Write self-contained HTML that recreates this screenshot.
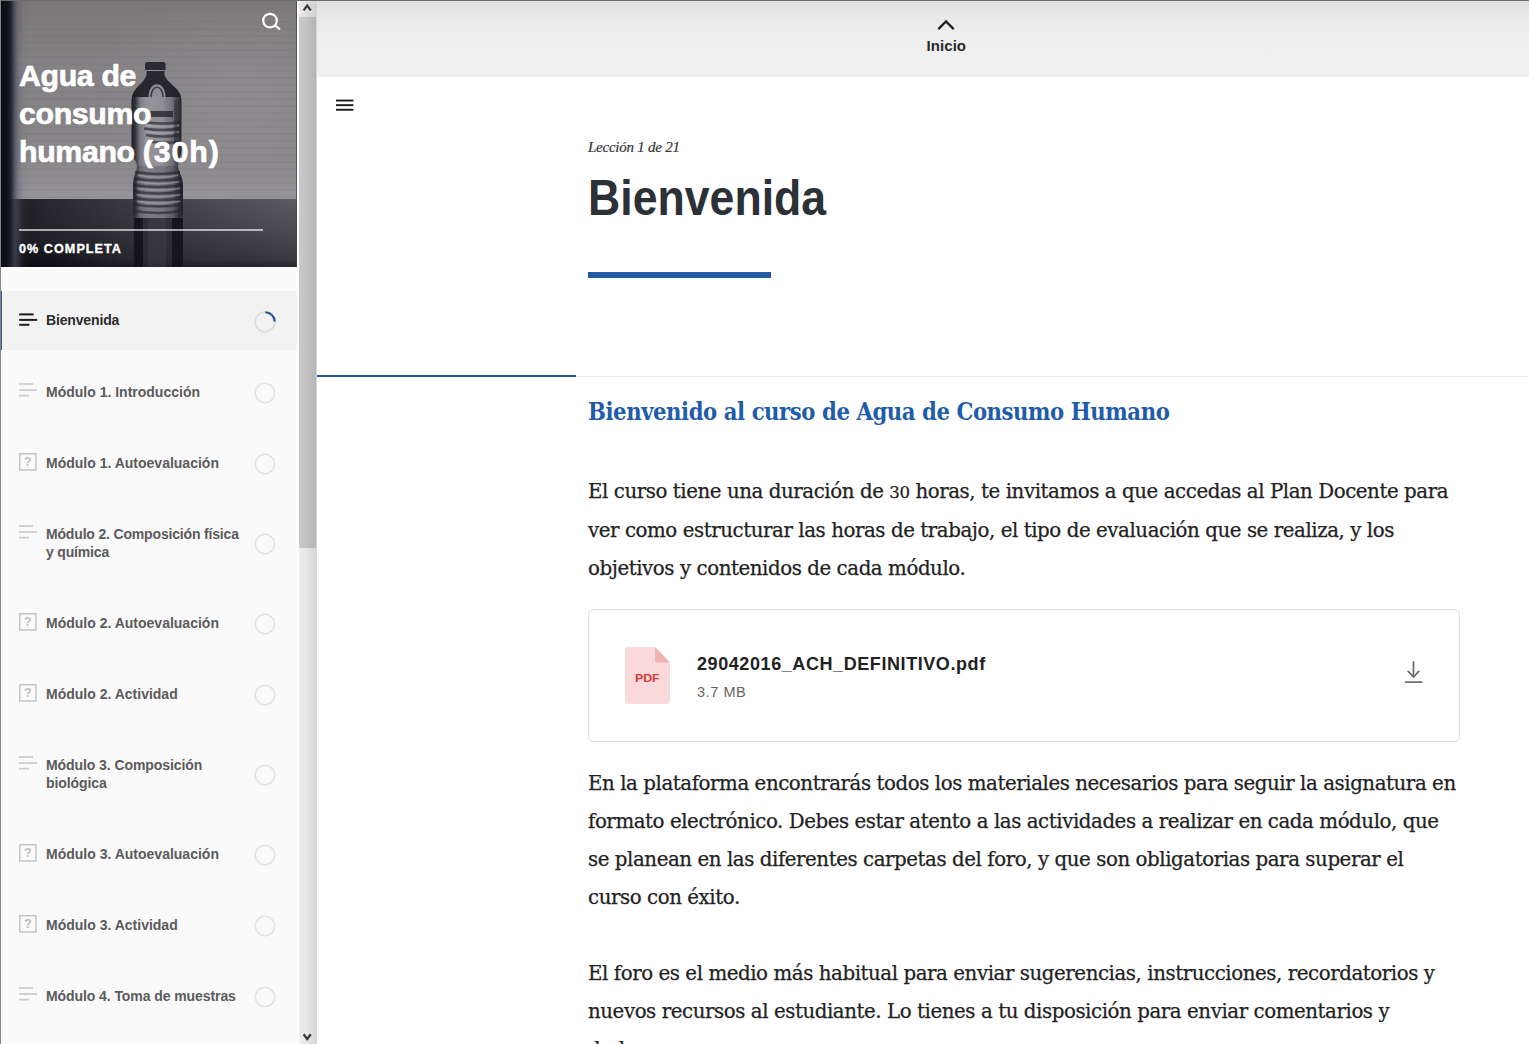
<!DOCTYPE html>
<html lang="es">
<head>
<meta charset="utf-8">
<title>Agua de consumo humano (30h)</title>
<style>
*{box-sizing:border-box;margin:0;padding:0}
html,body{width:1529px;height:1044px;overflow:hidden;background:#fff}
body{position:relative;font-family:"Liberation Sans",sans-serif;color:#222}
.abs{position:absolute}
.nw{white-space:nowrap}
/* ---------- frame ---------- */
#topline{left:0;top:0;width:1529px;height:1px;background:#6c6c6c;z-index:50}
#leftline{left:0;top:0;width:1px;height:1044px;background:#848484;z-index:50}
/* ---------- sidebar ---------- */
#side{left:0;top:0;width:297px;height:1044px;background:#fafafa;overflow:hidden}
#hero{left:0;top:0;width:297px;height:267px;overflow:hidden;background:#86848a}
#hero svg{position:absolute;left:0;top:0}
#ctitle{left:19px;top:57px;width:270px;font-weight:bold;font-size:30.3px;line-height:38px;color:#fff;letter-spacing:-0.35px;-webkit-text-stroke:.7px #fff}
#ctitle span{letter-spacing:.9px}
#pline{left:19px;top:229px;width:244px;height:2px;background:rgba(255,255,255,.62)}
#pct{left:19px;top:241px;font-weight:bold;font-size:12.6px;line-height:16px;letter-spacing:1.05px;color:#fff;-webkit-text-stroke:.35px #fff}
.item{left:0;width:297px;height:59px}
.item.act{background:#f2f2f2;border-left:2px solid #2a5a9c}
.item .t{position:absolute;left:46px;top:20.8px;font-weight:bold;font-size:14px;line-height:18.5px;color:#5b5b5b;white-space:nowrap}
.item.two{height:77px}
.item.two .t{top:20.5px}
.item.act .t{color:#2b2b2b;left:44px;top:19.8px;letter-spacing:-.15px}
.item svg{position:absolute}
/* ---------- scrollbar ---------- */
#sgap{left:297px;top:0;width:2px;height:1044px;background:#fff}
#sbar{left:299px;top:0;width:18px;height:1044px;background:linear-gradient(90deg,#efefef 0,#e6e6e6 40%,#d6d6d6 100%)}
#sthumb{left:299px;top:17px;width:16.6px;height:531px;background:linear-gradient(90deg,#c9c9c9 0,#c1c1c1 50%,#b5b5b5 100%)}
/* ---------- main ---------- */
#topbar{left:317px;top:0;width:1212px;height:77px;background:linear-gradient(180deg,#dfdfdf 0,#e5e5e5 12%,#ebebeb 30%,#efefef 52%,#f0f0f0 100%)}
#inicio{left:926.6px;top:37px;font-weight:bold;font-size:15px;line-height:18px;color:#2a2a2a;letter-spacing:.05px}
#lec{left:588px;top:138px;font-family:"Liberation Serif",serif;font-style:italic;font-size:15px;line-height:18px;color:#333;letter-spacing:-.25px;-webkit-text-stroke:.2px #333}
#h1{left:588px;top:168px;font-weight:bold;font-size:50px;line-height:60px;color:#2b3137;transform-origin:0 50%;transform:scaleX(.893)}
#bar{left:588px;top:272px;width:183px;height:6px;background:#255ba3}
#div1{left:317px;top:375px;width:259px;height:2px;background:#24559a}
#div2{left:576px;top:376px;width:953px;height:1px;background:#ebebeb}
#h2{left:588px;top:397px;font-family:"DejaVu Serif Condensed","DejaVu Serif","Liberation Serif",serif;font-weight:bold;font-size:24.4px;line-height:30px;color:#1f5cab;letter-spacing:-.45px;transform-origin:0 50%;transform:scaleX(.9665)}
.p{left:588px;font-family:"DejaVu Serif","Liberation Serif",serif;font-size:19.8px;line-height:38px;color:#222;-webkit-text-stroke:.25px #222;letter-spacing:-.43px}
#file{left:588px;top:609px;width:871.5px;height:132.6px;border:1px solid #dcdcdc;border-radius:5px;background:#fff}
#fname{left:697px;top:653px;font-weight:bold;font-size:18px;line-height:22px;color:#222;letter-spacing:.58px}
#fsize{left:697px;top:683px;font-size:14.5px;line-height:18px;color:#666;letter-spacing:.55px}
</style>
</head>
<body>

<!-- ================= SIDEBAR ================= -->
<div id="side" class="abs">
  <div id="hero" class="abs">
    <svg width="297" height="267" viewBox="0 0 297 267">
      <defs>
        <linearGradient id="wall" x1="0" y1="0" x2="0" y2="1">
          <stop offset="0" stop-color="#7a7678"/>
          <stop offset=".3" stop-color="#848184"/>
          <stop offset=".8" stop-color="#8a878b"/>
          <stop offset=".95" stop-color="#949196"/>
          <stop offset="1" stop-color="#9a979c"/>
        </linearGradient>
        <linearGradient id="tbl" x1="0" y1="0" x2="0" y2="1">
          <stop offset="0" stop-color="#5f5e66"/>
          <stop offset=".45" stop-color="#504f57"/>
          <stop offset=".88" stop-color="#3d3c44"/>
          <stop offset="1" stop-color="#26262c"/>
        </linearGradient>
        <linearGradient id="tbld" x1="0" y1="0" x2="1" y2="0">
          <stop offset="0" stop-color="#0b0b11" stop-opacity=".82"/>
          <stop offset=".15" stop-color="#0b0b11" stop-opacity=".66"/>
          <stop offset=".4" stop-color="#0c0c12" stop-opacity=".46"/>
          <stop offset=".7" stop-color="#0c0c12" stop-opacity=".24"/>
          <stop offset="1" stop-color="#0c0c12" stop-opacity=".04"/>
        </linearGradient>
        <radialGradient id="vig" cx="0" cy="1" r=".42" gradientTransform="scale(1 1)">
          <stop offset="0" stop-color="#07070b" stop-opacity=".8"/>
          <stop offset=".5" stop-color="#0a0a10" stop-opacity=".4"/>
          <stop offset="1" stop-color="#0a0a10" stop-opacity="0"/>
        </radialGradient>
        <linearGradient id="ledge" x1="0" y1="0" x2="1" y2="0">
          <stop offset="0" stop-color="#0a0c12" stop-opacity="1"/>
          <stop offset=".026" stop-color="#10131a" stop-opacity="1"/>
          <stop offset=".038" stop-color="#1f232d" stop-opacity=".96"/>
          <stop offset=".048" stop-color="#3e4352" stop-opacity=".8"/>
          <stop offset=".06" stop-color="#555768" stop-opacity=".45"/>
          <stop offset=".076" stop-color="#5c5c68" stop-opacity=".12"/>
          <stop offset=".1" stop-color="#5c5c68" stop-opacity="0"/>
          <stop offset="1" stop-color="#5c5c68" stop-opacity="0"/>
        </linearGradient>
        <radialGradient id="glow" cx=".8" cy=".45" r=".5">
          <stop offset="0" stop-color="#a09ea2" stop-opacity=".3"/>
          <stop offset="1" stop-color="#a09ea2" stop-opacity="0"/>
        </radialGradient>
        <linearGradient id="bot" x1="0" y1="0" x2="1" y2="0">
          <stop offset="0" stop-color="#1f1f27"/>
          <stop offset=".07" stop-color="#32323b"/>
          <stop offset=".17" stop-color="#7d7c83"/>
          <stop offset=".3" stop-color="#95949a"/>
          <stop offset=".6" stop-color="#8f8e94"/>
          <stop offset=".8" stop-color="#6f6e76"/>
          <stop offset=".92" stop-color="#34343d"/>
          <stop offset="1" stop-color="#1f1f27"/>
        </linearGradient>
        <linearGradient id="refl" x1="0" y1="0" x2="0" y2="1">
          <stop offset="0" stop-color="#0f0f15" stop-opacity=".8"/>
          <stop offset="1" stop-color="#0f0f15" stop-opacity=".35"/>
        </linearGradient>
        <pattern id="blinds" width="4" height="7" patternUnits="userSpaceOnUse">
          <rect width="4" height="7" fill="none"/>
          <rect y="0" width="4" height="2" fill="#6b696e" opacity=".14"/>
        </pattern>
      </defs>
      <rect width="297" height="200" fill="url(#wall)"/>
      <rect width="297" height="200" fill="url(#glow)"/>
      <rect y="18" width="297" height="180" fill="url(#blinds)"/>
      <rect y="199" width="297" height="68" fill="url(#tbl)"/>
      <rect y="199" width="297" height="68" fill="url(#tbld)"/>
      <rect y="199" width="297" height="68" fill="url(#vig)"/>
      <!-- bottle reflection -->
      <rect x="134" y="218" width="49" height="49" fill="#2a2a34" opacity=".55"/>
      <rect x="134" y="218" width="9" height="49" fill="#0d0d13" opacity=".75"/>
      <rect x="172" y="218" width="11" height="49" fill="#0d0d13" opacity=".75"/>
      <rect x="148" y="218" width="18" height="49" fill="#55555f" opacity=".22"/>
      <!-- bottle -->
      <path d="M145 70 L145 64.4 Q145 62 147.4 62 L163.2 62 Q165.6 62 165.6 64.4 L165.6 70 Z" fill="#2a2a33"/>
      <path d="M146.5 70 H164.5 V75 C166.5 83 180.5 88 181.5 100 V150 C181 158 178 161 178 166 C178 172 183 176 183 186 V213 Q183 218 178 218 H138 Q133 218 133 213 V186 C133 176 137 172 137 166 C137 161 132 158 131.5 150 V100 C132.5 88 144.5 83 146.5 75 Z" fill="url(#bot)"/>
      <path d="M146.5 71 H164.5 V75 C166.5 83 180 88 181 97 L132 97 C133 88 144.5 83 146.5 75 Z" fill="#202028" opacity=".93"/>
      <path d="M148.5 97 C148.5 80 165.5 80 165.5 97 Z" fill="#9a999f" opacity=".9"/>
      <path d="M151 97 C151 84 163 84 163 97" fill="none" stroke="#2a2a33" stroke-width="1.6" opacity=".8"/>
      <path d="M137 166 H178 C178 172 183 176 183 186 V213 Q183 218 178 218 H138 Q133 218 133 213 V186 C133 176 137 172 137 166 Z" fill="#25252e" opacity=".22"/>
      <rect x="150" y="111" width="23" height="6" fill="#25252e" opacity=".8"/>
      <g stroke="#22222a" stroke-width="2.4" opacity=".62" fill="none">
        <path d="M144 122 Q162 125 181 122"/>
        <path d="M144 128.5 Q162 131.5 181 128.5"/>
        <path d="M146 135 Q162 138 181 135"/>
        <path d="M150 141.5 Q164 144 181 141.5"/>
        <path d="M135 172 Q158 176 180 172"/>
        <path d="M134 178.5 Q158 182.5 181.5 178.5"/>
        <path d="M133.5 185 Q158 189 182.5 185"/>
        <path d="M133.5 191.5 Q158 195.5 183 191.5"/>
        <path d="M133.5 198 Q158 202 183 198"/>
        <path d="M133.5 204.5 Q158 208.5 183 204.5"/>
        <path d="M135 211 Q158 215 182 211"/>
      </g>
      <g stroke="#b4b3b8" stroke-width="1.4" opacity=".5" fill="none">
        <path d="M146 125.3 Q162 128.3 179 125.3"/>
        <path d="M146 131.8 Q162 134.8 179 131.8"/>
        <path d="M138 175.2 Q158 179.2 178 175.2"/>
        <path d="M137 181.8 Q158 185.8 179 181.8"/>
        <path d="M137 188.3 Q158 192.3 180 188.3"/>
        <path d="M137 194.8 Q158 198.8 180 194.8"/>
        <path d="M137 201.3 Q158 205.3 180 201.3"/>
      </g>
      <rect x="174" y="100" width="3" height="48" fill="#26262f" opacity=".45"/>
      <rect width="297" height="267" fill="url(#ledge)"/>
      <rect x="296" y="0" width="1" height="267" fill="#45444c" opacity=".7"/>
      <!-- search icon -->
      <g fill="none" stroke="#fff" stroke-width="2.2" stroke-linecap="round">
        <circle cx="270" cy="20.6" r="6.8"/>
        <path d="M275.2 25.6 L279.4 28.9"/>
      </g>
    </svg>
    <div id="ctitle" class="abs">Agua de<br>consumo<br>humano <span>(30h)</span></div>
    <div id="pline" class="abs"></div>
    <div id="pct" class="abs nw">0% COMPLETA</div>
  </div>

  <div class="item act abs" style="top:291px">
    <svg style="left:17px;top:20px" width="20" height="18" viewBox="0 0 20 18"><g fill="#1e1e1e"><rect x="0.2" y="2.4" width="14.4" height="2"/><rect x="0.2" y="7.9" width="18" height="2"/><rect x="0.2" y="12.8" width="10.2" height="2"/></g></svg>
    <div class="t">Bienvenida</div>
    <svg style="left:249.9px;top:17.9px" width="26" height="26" viewBox="0 0 26 26"><circle cx="13" cy="13" r="9.8" fill="none" stroke="#dcdcdc" stroke-width="1.7"/><path d="M13.34 3.21 A9.8 9.8 0 0 1 22.79 12.66" fill="none" stroke="#2257a0" stroke-width="2.1"/></svg>
  </div>
  <div class="item abs" style="top:362px">
    <svg style="left:19.3px;top:20.2px" width="20" height="18" viewBox="0 0 20 18"><g fill="#cbcbcb"><rect x="0" y="1.2" width="14" height="1.7"/><rect x="0" y="7.2" width="18" height="1.7"/><rect x="0" y="12.8" width="10" height="1.7"/></g></svg>
    <div class="t">Módulo 1. Introducción</div>
    <svg style="left:252px;top:18.2px" width="26" height="26" viewBox="0 0 26 26"><circle cx="13" cy="13" r="9.7" fill="none" stroke="#e3e3e3" stroke-width="1.6"/></svg>
  </div>
  <div class="item abs" style="top:433px">
    <svg style="left:19.1px;top:20.4px" width="19" height="19" viewBox="0 0 19 19"><rect x="0.75" y="0.75" width="16.2" height="16.2" fill="none" stroke="#c3c3c3" stroke-width="1.5"/><text x="8.9" y="13.2" text-anchor="middle" font-family="Liberation Sans, sans-serif" font-size="12.5" font-weight="bold" fill="#bcbcbc">?</text></svg>
    <div class="t">Módulo 1. Autoevaluación</div>
    <svg style="left:252px;top:18.2px" width="26" height="26" viewBox="0 0 26 26"><circle cx="13" cy="13" r="9.7" fill="none" stroke="#e3e3e3" stroke-width="1.6"/></svg>
  </div>
  <div class="item two abs" style="top:504px">
    <svg style="left:19.3px;top:20.2px" width="20" height="18" viewBox="0 0 20 18"><g fill="#cbcbcb"><rect x="0" y="1.2" width="14" height="1.7"/><rect x="0" y="7.2" width="18" height="1.7"/><rect x="0" y="12.8" width="10" height="1.7"/></g></svg>
    <div class="t" style="letter-spacing:-.17px">Módulo 2. Composición física<br>y química</div>
    <svg style="left:252px;top:27.2px" width="26" height="26" viewBox="0 0 26 26"><circle cx="13" cy="13" r="9.7" fill="none" stroke="#e3e3e3" stroke-width="1.6"/></svg>
  </div>
  <div class="item abs" style="top:593px">
    <svg style="left:19.1px;top:20.4px" width="19" height="19" viewBox="0 0 19 19"><rect x="0.75" y="0.75" width="16.2" height="16.2" fill="none" stroke="#c3c3c3" stroke-width="1.5"/><text x="8.9" y="13.2" text-anchor="middle" font-family="Liberation Sans, sans-serif" font-size="12.5" font-weight="bold" fill="#bcbcbc">?</text></svg>
    <div class="t">Módulo 2. Autoevaluación</div>
    <svg style="left:252px;top:18.2px" width="26" height="26" viewBox="0 0 26 26"><circle cx="13" cy="13" r="9.7" fill="none" stroke="#e3e3e3" stroke-width="1.6"/></svg>
  </div>
  <div class="item abs" style="top:664px">
    <svg style="left:19.1px;top:20.4px" width="19" height="19" viewBox="0 0 19 19"><rect x="0.75" y="0.75" width="16.2" height="16.2" fill="none" stroke="#c3c3c3" stroke-width="1.5"/><text x="8.9" y="13.2" text-anchor="middle" font-family="Liberation Sans, sans-serif" font-size="12.5" font-weight="bold" fill="#bcbcbc">?</text></svg>
    <div class="t">Módulo 2. Actividad</div>
    <svg style="left:252px;top:18.2px" width="26" height="26" viewBox="0 0 26 26"><circle cx="13" cy="13" r="9.7" fill="none" stroke="#e3e3e3" stroke-width="1.6"/></svg>
  </div>
  <div class="item two abs" style="top:735px">
    <svg style="left:19.3px;top:20.2px" width="20" height="18" viewBox="0 0 20 18"><g fill="#cbcbcb"><rect x="0" y="1.2" width="14" height="1.7"/><rect x="0" y="7.2" width="18" height="1.7"/><rect x="0" y="12.8" width="10" height="1.7"/></g></svg>
    <div class="t" style="letter-spacing:-.08px">Módulo 3. Composición<br>biológica</div>
    <svg style="left:252px;top:27.2px" width="26" height="26" viewBox="0 0 26 26"><circle cx="13" cy="13" r="9.7" fill="none" stroke="#e3e3e3" stroke-width="1.6"/></svg>
  </div>
  <div class="item abs" style="top:824px">
    <svg style="left:19.1px;top:20.4px" width="19" height="19" viewBox="0 0 19 19"><rect x="0.75" y="0.75" width="16.2" height="16.2" fill="none" stroke="#c3c3c3" stroke-width="1.5"/><text x="8.9" y="13.2" text-anchor="middle" font-family="Liberation Sans, sans-serif" font-size="12.5" font-weight="bold" fill="#bcbcbc">?</text></svg>
    <div class="t">Módulo 3. Autoevaluación</div>
    <svg style="left:252px;top:18.2px" width="26" height="26" viewBox="0 0 26 26"><circle cx="13" cy="13" r="9.7" fill="none" stroke="#e3e3e3" stroke-width="1.6"/></svg>
  </div>
  <div class="item abs" style="top:895px">
    <svg style="left:19.1px;top:20.4px" width="19" height="19" viewBox="0 0 19 19"><rect x="0.75" y="0.75" width="16.2" height="16.2" fill="none" stroke="#c3c3c3" stroke-width="1.5"/><text x="8.9" y="13.2" text-anchor="middle" font-family="Liberation Sans, sans-serif" font-size="12.5" font-weight="bold" fill="#bcbcbc">?</text></svg>
    <div class="t">Módulo 3. Actividad</div>
    <svg style="left:252px;top:18.2px" width="26" height="26" viewBox="0 0 26 26"><circle cx="13" cy="13" r="9.7" fill="none" stroke="#e3e3e3" stroke-width="1.6"/></svg>
  </div>
  <div class="item abs" style="top:966px">
    <svg style="left:19.3px;top:20.2px" width="20" height="18" viewBox="0 0 20 18"><g fill="#cbcbcb"><rect x="0" y="1.2" width="14" height="1.7"/><rect x="0" y="7.2" width="18" height="1.7"/><rect x="0" y="12.8" width="10" height="1.7"/></g></svg>
    <div class="t" style="letter-spacing:-.08px">Módulo 4. Toma de muestras</div>
    <svg style="left:252px;top:18.2px" width="26" height="26" viewBox="0 0 26 26"><circle cx="13" cy="13" r="9.7" fill="none" stroke="#e3e3e3" stroke-width="1.6"/></svg>
  </div>
</div>

<!-- ================= SCROLLBAR ================= -->
<div id="sgap" class="abs"></div>
<div id="sbar" class="abs"></div>
<div id="sthumb" class="abs"></div>
<svg class="abs" style="left:299px;top:0" width="18" height="17" viewBox="0 0 18 17"><defs><linearGradient id="sbb" x1="0" x2="1" y1="0" y2="0"><stop offset="0" stop-color="#eaeaea"/><stop offset="1" stop-color="#d0d0d0"/></linearGradient></defs><rect width="18" height="17" fill="url(#sbb)"/><path d="M4.6 10.4 L8.2 5.6 L11.8 10.4" fill="none" stroke="#3a3a3a" stroke-width="2.3"/></svg>
<svg class="abs" style="left:299px;top:1027px" width="18" height="17" viewBox="0 0 18 17"><path d="M4.6 7.2 L8.2 12 L11.8 7.2" fill="none" stroke="#3a3a3a" stroke-width="2.3"/></svg>

<!-- ================= MAIN ================= -->
<div id="topbar" class="abs"></div>
<svg class="abs" style="left:934px;top:16px" width="24" height="18" viewBox="0 0 24 18"><path d="M4.3 13.1 L12 5.4 L19.7 13.1" fill="none" stroke="#222" stroke-width="2.3" stroke-linejoin="miter"/></svg>
<div id="inicio" class="abs nw">Inicio</div>

<svg class="abs" style="left:334px;top:96px" width="22" height="18" viewBox="0 0 22 18"><g fill="#1c1c1c"><rect x="2" y="3.6" width="17.4" height="1.9"/><rect x="2" y="8.2" width="17.4" height="1.9"/><rect x="2" y="12.8" width="17.4" height="1.9"/></g></svg>

<div id="lec" class="abs nw">Lección 1 de 21</div>
<div id="h1" class="abs nw">Bienvenida</div>
<div id="bar" class="abs"></div>
<div id="div1" class="abs"></div>
<div id="div2" class="abs"></div>

<div id="h2" class="abs nw">Bienvenido al curso de Agua de Consumo Humano</div>

<div class="p abs nw" style="top:472.5px">El curso tiene una duración de <span style="font-size:.84em">30</span> horas, te invitamos a que accedas al Plan Docente para<br>ver como estructurar las horas de trabajo, el tipo de evaluación que se realiza, y los<br>objetivos y contenidos de cada módulo.</div>

<div id="file" class="abs"></div>
<svg class="abs" style="left:625px;top:647px" width="45" height="57" viewBox="0 0 45 57"><path d="M3 0 H30 L45 15.6 V54 Q45 57 42 57 H3 Q0 57 0 54 V3 Q0 0 3 0 Z" fill="#f9d9d9"/><path d="M30 0 L45 15.6 H32.4 Q30 15.6 30 13.2 Z" fill="#f1b4b4"/><text x="22.3" y="34.8" text-anchor="middle" font-family="Liberation Sans, sans-serif" font-weight="bold" font-size="11.6" fill="#d43b3b" textLength="24.8" lengthAdjust="spacingAndGlyphs">PDF</text></svg>
<div id="fname" class="abs nw">29042016_ACH_DEFINITIVO.pdf</div>
<div id="fsize" class="abs nw">3.7 MB</div>
<svg class="abs" style="left:1401px;top:658px" width="26" height="28" viewBox="0 0 26 28"><g fill="none" stroke="#6a6e74" stroke-width="1.8" stroke-linecap="round" stroke-linejoin="round"><path d="M12.5 4 V19"/><path d="M7.2 13.4 L12.5 19 L17.8 13.4"/><path d="M4.7 24.1 H20.7"/></g></svg>

<div class="p abs nw" style="top:764.5px">En la plataforma encontrarás todos los materiales necesarios para seguir la asignatura en<br>formato electrónico. Debes estar atento a las actividades a realizar en cada módulo, que<br>se planean en las diferentes carpetas del foro, y que son obligatorias para superar el<br>curso con éxito.</div>

<div class="p abs nw" style="top:954.5px">El foro es el medio más habitual para enviar sugerencias, instrucciones, recordatorios y<br>nuevos recursos al estudiante. Lo tienes a tu disposición para enviar comentarios y<br>dudas.</div>

<div id="topline" class="abs"></div>
<div id="leftline" class="abs"></div>
</body>
</html>
